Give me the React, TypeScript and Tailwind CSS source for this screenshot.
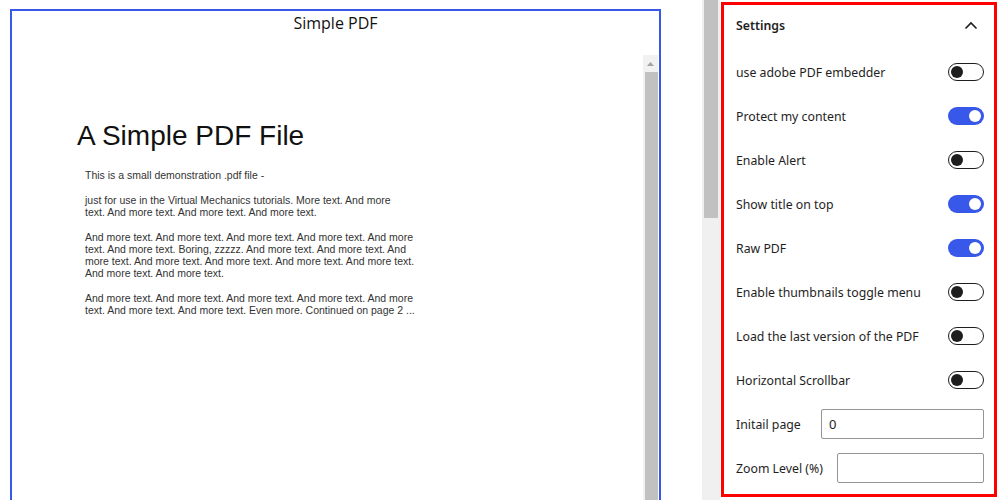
import React from 'react';

const settings = [
  { label: 'use adobe PDF embedder', on: false },
  { label: 'Protect my content', on: true },
  { label: 'Enable Alert', on: false },
  { label: 'Show title on top', on: true },
  { label: 'Raw PDF', on: true },
  { label: 'Enable thumbnails toggle menu', on: false },
  { label: 'Load the last version of the PDF', on: false },
  { label: 'Horizontal Scrollbar', on: false },
];

const paragraphs = [
  ['This is a small demonstration .pdf file -'],
  [
    'just for use in the Virtual Mechanics tutorials. More text. And more',
    'text. And more text. And more text. And more text.',
  ],
  [
    'And more text. And more text. And more text. And more text. And more',
    'text. And more text. Boring, zzzzz. And more text. And more text. And',
    'more text. And more text. And more text. And more text. And more text.',
    'And more text. And more text.',
  ],
  [
    'And more text. And more text. And more text. And more text. And more',
    'text. And more text. And more text. Even more. Continued on page 2 ...',
  ],
];

const Toggle = ({ on }: { on: boolean }) => (
  <span
    className={
      on
        ? 'relative inline-block w-[36px] h-[18px] rounded-full bg-[#3858e9]'
        : 'relative inline-block w-[36px] h-[18px] rounded-full bg-white border border-[#1e1e1e]'
    }
  >
    <span
      className={
        on
          ? 'absolute top-[3px] right-[3px] w-[12px] h-[12px] rounded-full bg-white'
          : 'absolute top-[2px] left-[2px] w-[12px] h-[12px] rounded-full bg-[#1e1e1e]'
      }
    />
  </span>
);

export default function App() {
  return (
    <div className="w-[1000px] h-[500px] overflow-hidden bg-white flex">
      {/* Editor canvas */}
      <div className="w-[702px] h-full pt-[9px] pl-[10px]">
        <div className="w-[651px] h-[520px] border-2 border-[#3858e9] flex flex-col">
          <div
            className="h-[44px] text-center text-[16px] leading-[20px] pt-[2px] text-[#111]"
            style={{ fontFamily: '"Open Sans", "Noto Sans", sans-serif' }}
          >
            Simple PDF
          </div>
          {/* PDF viewer */}
          <div className="flex-1 flex">
            <div className="flex-1 pl-[65px] pt-[66px]" style={{ fontFamily: '"Liberation Sans", Arial, sans-serif' }}>
              <h1 className="text-[28px] leading-[30px] text-[#111]">A Simple PDF File</h1>
              <div className="mt-[18px] pl-[8px] text-[10.5px] leading-[12px] text-[#333]">
                {paragraphs.map((p, i) => (
                  <p key={i} className="mb-[13px]">
                    {p.map((line) => (
                      <span key={line} className="block whitespace-nowrap">
                        {line}
                      </span>
                    ))}
                  </p>
                ))}
              </div>
            </div>
            <div className="w-[15px] mr-[1px] bg-[#f1f1f1] flex flex-col">
              <div className="h-[17px] flex items-center justify-center">
                <svg width="7" height="4" viewBox="0 0 7 4">
                  <path d="M3.5 0 L7 4 L0 4 Z" fill="#a3a3a3" />
                </svg>
              </div>
              <div className="flex-1 ml-[2px] bg-[#c1c1c1]" />
            </div>
          </div>
        </div>
      </div>

      {/* Canvas scrollbar */}
      <div className="w-[18px] h-full bg-[#f0f0f0] px-[2px]">
        <div className="h-[218px] bg-[#c1c1c1]" />
      </div>

      {/* Settings panel */}
      <div className="pl-[1px] pt-[2px]">
        <div
          className="w-[276px] h-[495px] border-[3px] border-[#ff0000] pl-[12px] pr-[10px] text-[#1e1e1e] text-[12.3px]"
          style={{ fontFamily: '"Noto Sans", "Open Sans", sans-serif' }}
        >
          <div className="h-[41px] flex items-center justify-between">
            <span className="font-semibold mt-[2px]">Settings</span>
            <svg width="24" height="24" viewBox="0 0 24 24" className="mr-[1px]">
              <path d="M6.5 14.5 L12 9 L17.5 14.5" fill="none" stroke="#1e1e1e" strokeWidth="1.6" />
            </svg>
          </div>
          <div className="pt-[4px]">
            {settings.map((s) => (
              <div key={s.label} className="h-[44px] flex items-center justify-between">
                <span className="mt-[2px]">{s.label}</span>
                <Toggle on={s.on} />
              </div>
            ))}
            <div className="h-[44px] flex items-center">
              <span className="w-[85px] shrink-0 mt-[2px]">Initail page</span>
              <input
                defaultValue="0"
                className="flex-1 min-w-0 w-0 h-[30px] border border-[#949494] rounded-[2px] px-[7px] text-[13px] text-[#1e1e1e] outline-none"
              />
            </div>
            <div className="h-[44px] flex items-center">
              <span className="w-[101px] shrink-0 mt-[2px]">Zoom Level (%)</span>
              <input className="flex-1 min-w-0 w-0 h-[30px] border border-[#949494] rounded-[2px] px-[7px] text-[13px] outline-none" />
            </div>
          </div>
        </div>
      </div>
    </div>
  );
}
